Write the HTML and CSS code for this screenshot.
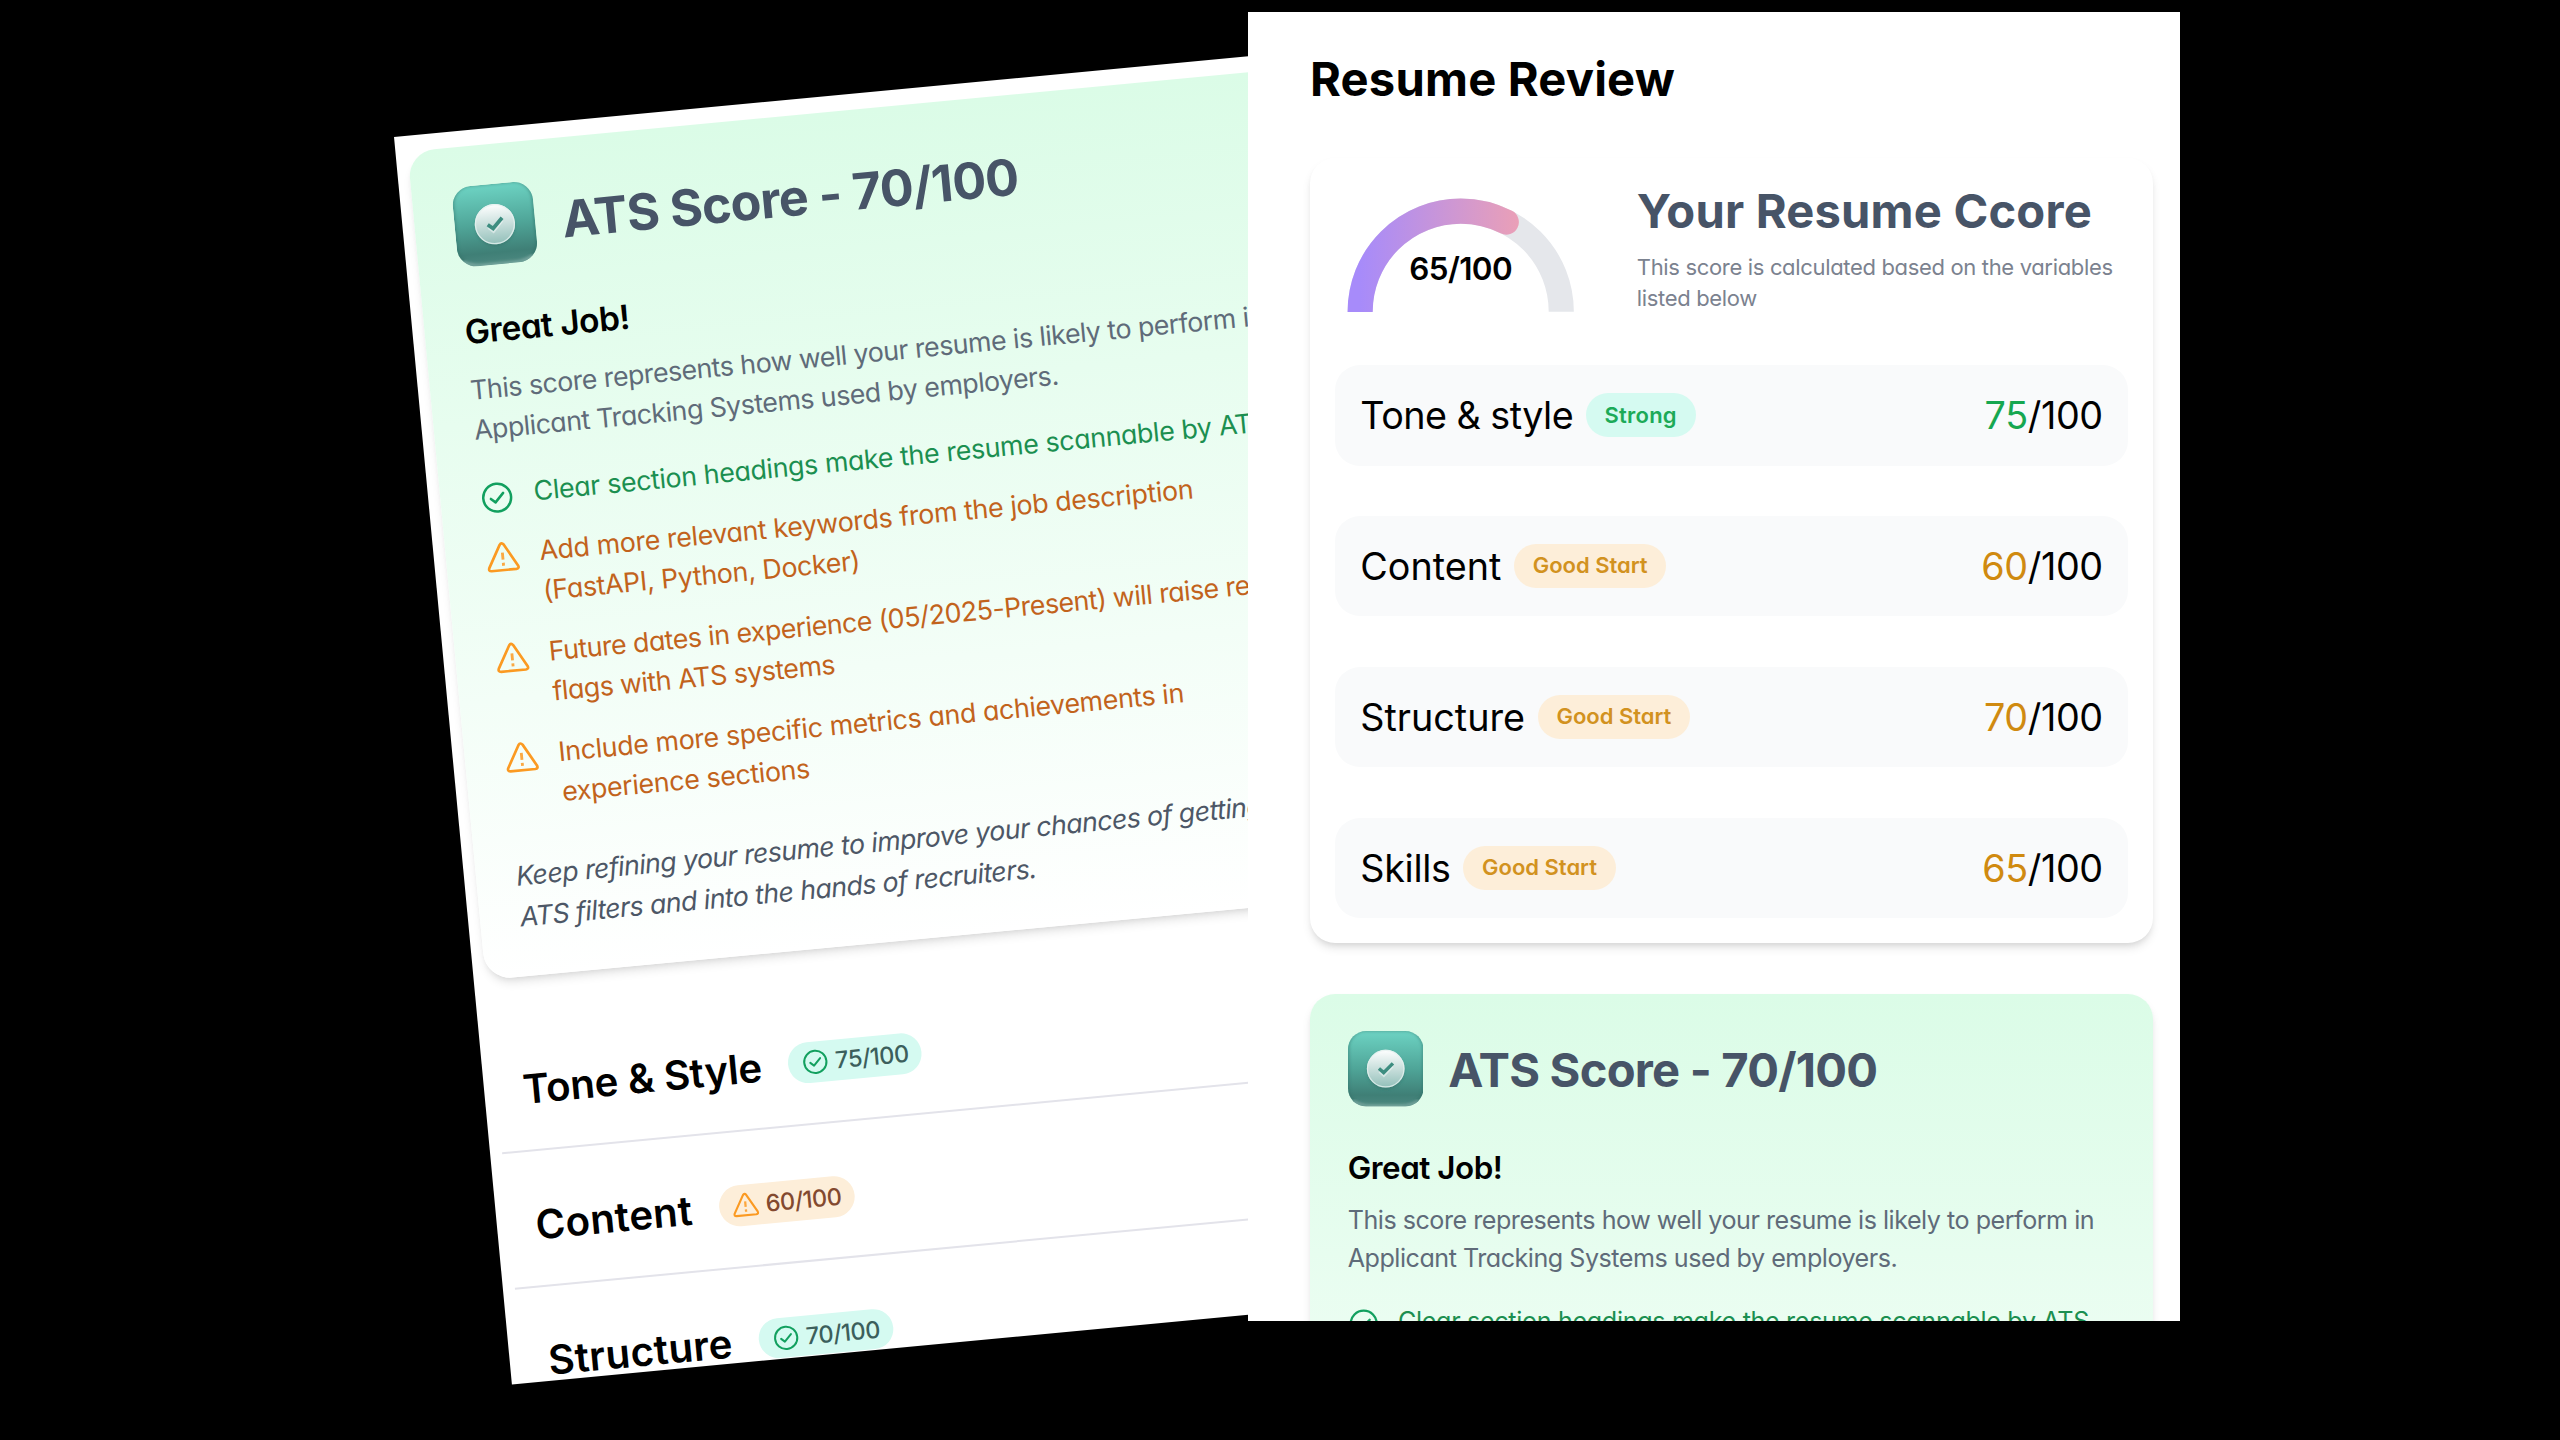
FILE: index.html
```html
<!DOCTYPE html>
<html lang="en">
<head>
<meta charset="utf-8">
<title>Resume Review</title>
<link rel="stylesheet" href="styles.css">
</head>
<body>
<svg class="defs" aria-hidden="true">
  <defs>
    <linearGradient id="tile" x1="0" y1="0" x2="0" y2="1"><stop offset="0" stop-color="#6dd3c3"/><stop offset=".5" stop-color="#4fa598"/><stop offset=".85" stop-color="#3f7f76"/><stop offset="1" stop-color="#4c8880"/></linearGradient>
    <linearGradient id="seal" x1="0" y1="0" x2="0" y2="1"><stop offset="0" stop-color="#ffffff"/><stop offset="1" stop-color="#92bfb9"/></linearGradient>
    <linearGradient id="arc" x1="0" y1="0" x2="1" y2="0"><stop offset="0" stop-color="#a78bfa"/><stop offset="1" stop-color="#fca5a5"/></linearGradient>
    <filter id="soft" x="-20%" y="-20%" width="140%" height="140%"><feGaussianBlur stdDeviation="1.1"/></filter>
    <clipPath id="tile-clip"><rect width="48" height="48" rx="11.5"/></clipPath>
    <symbol id="ats" viewBox="0 0 48 48">
      <g clip-path="url(#tile-clip)">
        <rect width="48" height="48" fill="url(#tile)"/>
        <rect x="0" y="-.6" width="48" height="48" rx="11.5" fill="none" stroke="#2f6d65" stroke-opacity=".55" stroke-width="1.6" filter="url(#soft)"/>
        <path d="M3 44.5Q8 47.6 14 47.6H34Q40 47.6 45 44.5" fill="none" stroke="#b5d2cd" stroke-opacity=".7" stroke-width="1.4" filter="url(#soft)"/>
      </g>
      <circle cx="24" cy="25.4" r="11.8" fill="#2c665e" fill-opacity=".4" filter="url(#soft)"/>
      <circle cx="24" cy="24" r="12" fill="url(#seal)"/>
      <circle cx="24" cy="24" r="11.6" fill="none" stroke="#e3f1ef" stroke-opacity=".8" stroke-width=".8"/>
      <path d="M20 25.8l2.8 2.6 5.6-6" fill="none" stroke="#ffffff" stroke-opacity=".45" stroke-width="1.6"/>
      <path d="M19.7 23.9l3 2.6 5.9-5.9" fill="none" stroke="#3d8d80" stroke-width="2.2"/>
    </symbol>
    <symbol id="check" viewBox="0 0 20 20">
      <g fill="none" stroke="#12a05f" stroke-linecap="round" stroke-linejoin="round" stroke-width="1.5"><circle cx="10" cy="10" r="8.3"/><path d="M6.2 10.4l2.6 2.3 5-5.2"/></g>
    </symbol>
    <symbol id="warn" viewBox="0 0 20 20">
      <g fill="none" stroke="#fb9a22" stroke-linecap="round" stroke-linejoin="round"><path d="M8.8 2.4Q10 .8 11.2 2.4L18.6 15.6Q19.4 17.4 17.4 17.6H2.6Q.6 17.4 1.4 15.6Z" stroke-width="1.6"/><path d="M10 7.2v4.2M10 13.2v1.8" stroke-width="1.7" stroke-linecap="butt" stroke-opacity=".85"/></g>
    </symbol>
  </defs>
</svg>

<main class="stage">
  <section class="panel panel--tilted">
    <article class="card ats">
      <header class="ats__head"><svg class="ats__icon"><use href="#ats"/></svg><h2 class="title title--slate title--ats">ATS Score - 70/100</h2></header>
      <div class="ats__intro">
        <h3 class="subtitle">Great Job!</h3>
        <p class="text">This score represents how well your resume is likely to perform in<br>Applicant Tracking Systems used by employers.</p>
      </div>
      <ul class="tips">
        <li class="tip tip--good"><svg class="tip__icon"><use href="#check"/></svg><p>Clear section headings make the resume scannable by ATS</p></li>
        <li class="tip"><svg class="tip__icon"><use href="#warn"/></svg><p>Add more relevant keywords from the job description<br>(FastAPI, Python, Docker)</p></li>
        <li class="tip tip--dense"><svg class="tip__icon"><use href="#warn"/></svg><p>Future dates in experience (05/2025-Present) will raise red<br>flags with ATS systems</p></li>
        <li class="tip"><svg class="tip__icon"><use href="#warn"/></svg><p>Include more specific metrics and achievements in<br>experience sections</p></li>
      </ul>
      <p class="text text--note">Keep refining your resume to improve your chances of getting past<br>ATS filters and into the hands of recruiters.</p>
    </article>
    <div class="accordion">
      <div class="accordion__item"><h3 class="accordion__title accordion__title--tone">Tone &amp; Style</h3><span class="chip"><svg class="chip__icon"><use href="#check"/></svg>75/100</span></div>
      <div class="accordion__item"><h3 class="accordion__title">Content</h3><span class="chip chip--warn"><svg class="chip__icon"><use href="#warn"/></svg>60/100</span></div>
      <div class="accordion__item"><h3 class="accordion__title">Structure</h3><span class="chip"><svg class="chip__icon"><use href="#check"/></svg>70/100</span></div>
    </div>
  </section>

  <section class="panel panel--front">
    <h1 class="title">Resume Review</h1>
    <article class="card summary">
      <header class="summary__head">
        <svg class="gauge" viewBox="0 0 100 50">
          <path d="M10 50A40 40 0 0 1 90 50" fill="none" stroke="#e5e7eb" stroke-width="10"/>
          <path d="M10 50A40 40 0 0 1 90 50" fill="none" stroke="url(#arc)" stroke-width="10" stroke-linecap="round" pathLength="100" stroke-dasharray="65 200"/>
          <text class="gauge__value" x="50" y="37.2" text-anchor="middle">65/100</text>
        </svg>
        <div class="summary__text"><h2 class="title title--slate">Your Resume Ccore</h2><p class="small">This score is calculated based on the variables<br>listed below</p></div>
      </header>
      <div class="row-wrap"><div class="row"><span class="row__name row__name--tone">Tone &amp; style</span><span class="pill pill--strong">Strong</span><span class="row__score"><b class="good">75</b>/100</span></div></div>
      <div class="row-wrap"><div class="row"><span class="row__name">Content</span><span class="pill">Good Start</span><span class="row__score"><b>60</b>/100</span></div></div>
      <div class="row-wrap"><div class="row"><span class="row__name">Structure</span><span class="pill">Good Start</span><span class="row__score"><b>70</b>/100</span></div></div>
      <div class="row-wrap"><div class="row"><span class="row__name row__name--skills">Skills</span><span class="pill">Good Start</span><span class="row__score"><b>65</b>/100</span></div></div>
    </article>
    <article class="card ats">
      <header class="ats__head"><svg class="ats__icon"><use href="#ats"/></svg><h2 class="title title--slate title--ats">ATS Score - 70/100</h2></header>
      <div class="ats__intro">
        <h3 class="subtitle">Great Job!</h3>
        <p class="text">This score represents how well your resume is likely to perform in<br>Applicant Tracking Systems used by employers.</p>
      </div>
      <ul class="tips">
        <li class="tip tip--good"><svg class="tip__icon"><use href="#check"/></svg><p>Clear section headings make the resume scannable by ATS</p></li>
      </ul>
    </article>
  </section>
</main>
</body>
</html>
```
FILE: styles.css
```css
* { box-sizing: border-box; margin: 0; padding: 0; }
body { background: #000; font-family: Inter, "Liberation Sans", sans-serif; font-feature-settings: "cv11" 1; color: #000; }
.defs { position: absolute; width: 0; height: 0; }
.stage { position: relative; width: 2560px; height: 1440px; overflow: hidden; }

/* --u is one design pixel; each panel is shown at its own zoom */
.panel { position: absolute; overflow: hidden; background: #fff; display: flex; flex-direction: column; white-space: nowrap; }
.panel--tilted { --u: 1.678px; left: 394px; top: 137.4px; width: 995px; height: 1252.5px; padding: 16px 82px 0 11.8px; transform: rotate(-5.4deg); transform-origin: 0 0; }
.panel--front { --u: 1.5714px; left: 1248px; top: 12px; width: 932px; height: 1308.7px; padding: 38.8px 27px 0 62px; gap: calc(32 * var(--u)); }

.card { flex: none; border-radius: calc(16 * var(--u)); box-shadow: 0 calc(4 * var(--u)) calc(6 * var(--u)) calc(-1 * var(--u)) #0000001a, 0 calc(2 * var(--u)) calc(4 * var(--u)) calc(-2 * var(--u)) #0000001a; }
.title { font-size: calc(30 * var(--u)); line-height: calc(36 * var(--u)); font-weight: 700; letter-spacing: .004em; }
.title--slate { color: #475467; }
.title--ats { padding-top: calc(1.4 * var(--u)); letter-spacing: -.0165em; }

.summary { background: #fff; }
.summary__head { display: flex; align-items: center; gap: calc(32 * var(--u)); padding: calc(16 * var(--u)); }
.summary__text { display: flex; flex-direction: column; gap: calc(8 * var(--u)); }
.gauge { flex: none; width: calc(160 * var(--u)); height: calc(80 * var(--u)); }
.gauge__value { font-size: 12.5px; font-weight: 600; letter-spacing: -.02em; }
.small { font-size: calc(14 * var(--u)); line-height: calc(20 * var(--u)); color: #7b828f; letter-spacing: -.015em; }
.row-wrap { padding: calc(16 * var(--u)); }
.row { display: flex; align-items: center; gap: calc(8 * var(--u)); padding: calc(16 * var(--u)); border-radius: calc(16 * var(--u)); background: #f9fafb; font-size: calc(24 * var(--u)); line-height: calc(32 * var(--u)); }
.row__name--tone { letter-spacing: -.014em; }
.row__name--skills { letter-spacing: -.008em; }
.row__score { margin-left: auto; letter-spacing: -.01em; }
.row__score b { font-weight: 400; color: #d08a10; }
.row__score .good { color: #16a750; }
.pill { padding: calc(4 * var(--u)) calc(12 * var(--u)); border-radius: 99px; background: #fdeed9; color: #d2921f; font-size: calc(14 * var(--u)); line-height: calc(20 * var(--u)); font-weight: 600; }
.pill--strong { background: #d5faf1; color: #1caa58; letter-spacing: .01em; }

.ats { padding: calc(24 * var(--u)); height: calc(496 * var(--u)); background: linear-gradient(#dbfce7, #fff); }
.ats__head { display: flex; align-items: center; gap: calc(16 * var(--u)); margin-bottom: calc(24 * var(--u)); }
.ats__icon { width: calc(48 * var(--u)); height: calc(48 * var(--u)); }
.ats__intro { display: flex; flex-direction: column; gap: calc(8 * var(--u)); padding-top: calc(.8 * var(--u)); margin-bottom: calc(15.2 * var(--u)); }
.subtitle { font-size: calc(20 * var(--u)); line-height: calc(28 * var(--u)); font-weight: 600; letter-spacing: -.015em; }
.text { font-size: calc(16 * var(--u)); line-height: calc(24 * var(--u)); color: #5f6b79; letter-spacing: -.0195em; }
.text--note { margin-top: calc(24 * var(--u)); font-style: italic; color: #4d5766; letter-spacing: -.022em; }
.tips { display: flex; flex-direction: column; gap: calc(12 * var(--u)); list-style: none; }
.tip { display: flex; align-items: flex-start; gap: calc(12 * var(--u)); font-size: calc(16 * var(--u)); line-height: calc(24 * var(--u)); color: #c2631c; letter-spacing: -.013em; }
.tip--dense { letter-spacing: -.02em; }
.tip--good { color: #1b8f50; }
.tip__icon { flex: none; width: calc(20 * var(--u)); height: calc(20 * var(--u)); margin-top: calc(4 * var(--u)); }
.panel--front .tip p { padding-top: calc(.8 * var(--u)); }

.accordion { margin-top: calc(23 * var(--u)); }
.accordion__item { display: flex; align-items: center; gap: calc(16 * var(--u)); height: calc(81 * var(--u)); padding: calc(8 * var(--u)) calc(16 * var(--u)) 0; border-bottom: 2px solid #e3e3ea; }
.accordion__title { font-size: calc(24 * var(--u)); line-height: calc(32 * var(--u)); font-weight: 600; letter-spacing: .007em; }
.accordion__title--tone { letter-spacing: -.006em; }
.chip { display: flex; align-items: center; gap: calc(4 * var(--u)); padding: calc(2 * var(--u)) calc(8 * var(--u)); border-radius: 99px; background: #d5faf1; color: #3c5f5c; font-size: calc(14 * var(--u)); line-height: calc(20 * var(--u)); font-weight: 500; letter-spacing: -.02em; }
.chip--warn { background: #fdeed9; color: #83492f; }
.chip__icon { width: calc(16 * var(--u)); height: calc(16 * var(--u)); }
```
